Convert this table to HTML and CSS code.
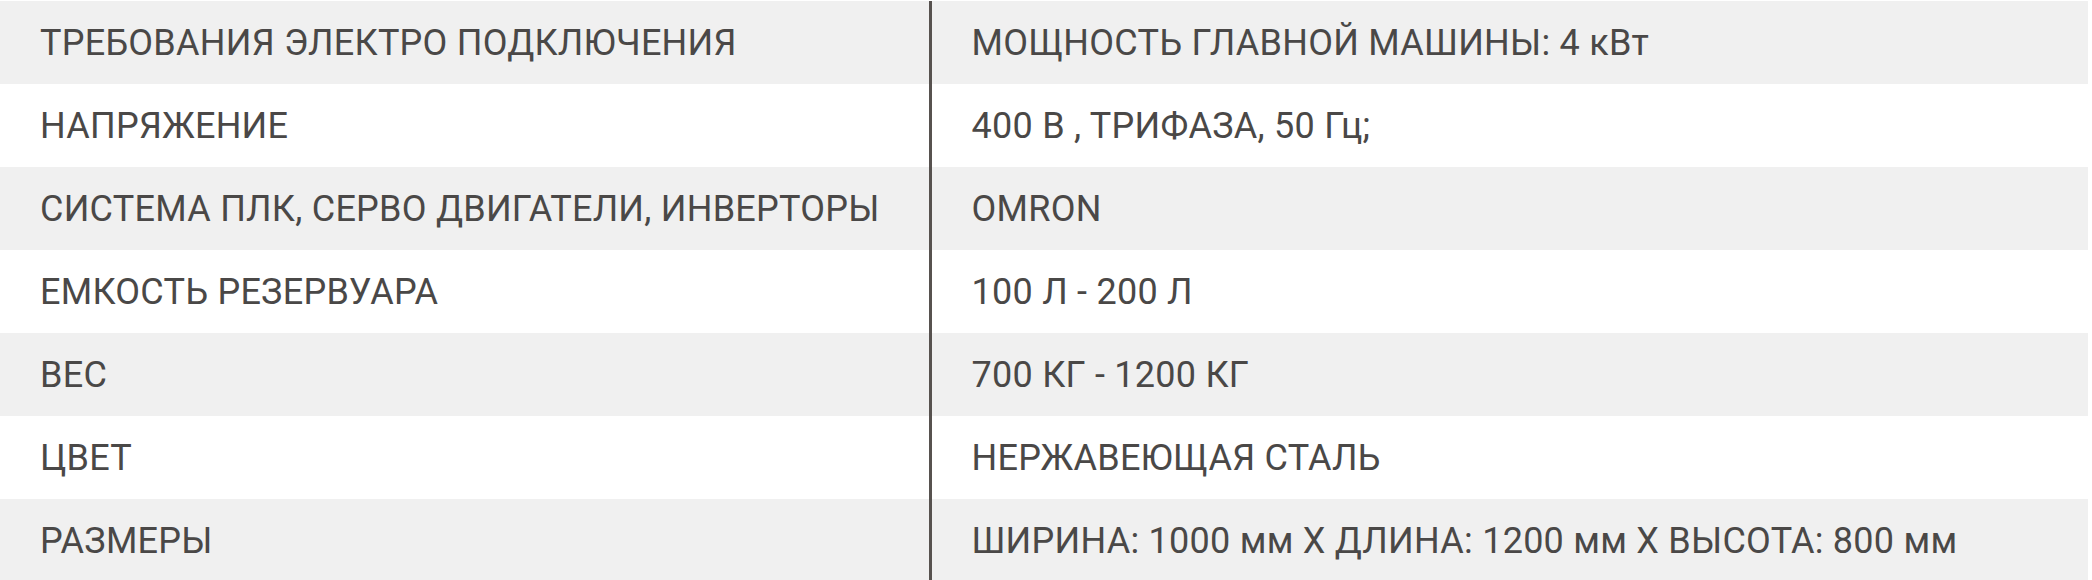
FILE: index.html
```html
<!DOCTYPE html>
<html lang="ru">
<head>
<meta charset="utf-8">
<title>Характеристики</title>
<link rel="stylesheet" href="styles.css">
</head>
<body>
<table class="specs">
  <tbody>
    <tr class="row-grey"><td class="label">ТРЕБОВАНИЯ ЭЛЕКТРО ПОДКЛЮЧЕНИЯ</td><td class="value">МОЩНОСТЬ ГЛАВНОЙ МАШИНЫ: 4 кВт</td></tr>
    <tr class="row-white"><td class="label">НАПРЯЖЕНИЕ</td><td class="value">400 В , ТРИФАЗА, 50 Гц;</td></tr>
    <tr class="row-grey"><td class="label">СИСТЕМА ПЛК, СЕРВО ДВИГАТЕЛИ, ИНВЕРТОРЫ</td><td class="value">OMRON</td></tr>
    <tr class="row-white"><td class="label">ЕМКОСТЬ РЕЗЕРВУАРА</td><td class="value">100 Л - 200 Л</td></tr>
    <tr class="row-grey"><td class="label">ВЕС</td><td class="value">700 КГ - 1200 КГ</td></tr>
    <tr class="row-white"><td class="label">ЦВЕТ</td><td class="value">НЕРЖАВЕЮЩАЯ СТАЛЬ</td></tr>
    <tr class="row-grey"><td class="label">РАЗМЕРЫ</td><td class="value">ШИРИНА: 1000 мм Х ДЛИНА: 1200 мм Х ВЫСОТА: 800 мм</td></tr>
  </tbody>
</table>
</body>
</html>
```
FILE: styles.css
```css
html, body {
  margin: 0;
  padding: 0;
  background: #ffffff;
}
body {
  padding-top: 1px;
  font-family: Roboto, "Noto Sans", sans-serif;
  color: #4a4847;
}
.specs {
  width: 2088px;
  border-collapse: collapse;
  table-layout: fixed;
}
.specs td {
  height: 83px;
  padding: 0 0 0 40px;
  font-size: 36px;
  letter-spacing: 0.25px;
  line-height: 1;
  vertical-align: middle;
  white-space: nowrap;
  box-sizing: border-box;
}
.specs .label {
  width: 930px;
}
.specs .value {
  border-left: 3px solid #57524f;
}
.row-grey td {
  background: #f0f0f0;
}
.row-white td {
  background: #ffffff;
}
```
